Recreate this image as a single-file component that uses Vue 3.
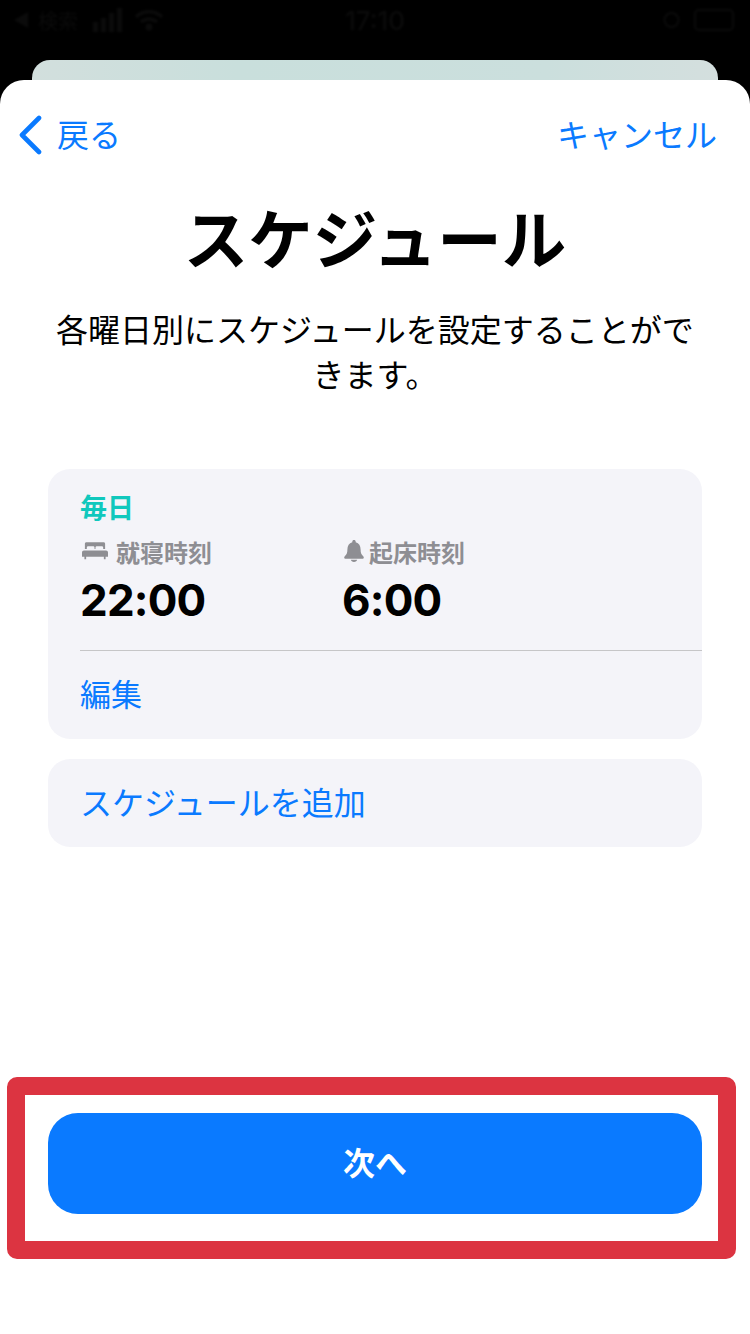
<script setup>
const schedule = { label: '毎日', bedtime: '22:00', wake: '6:00' }
</script>

<template>
  <div class="screen">
    <div class="status">
      <div class="status-left">
        <span class="back-tri"></span>
        <span class="search">検索</span>
        <svg class="signal" width="30" height="24" viewBox="0 0 30 24">
          <rect x="0" y="14" width="5" height="10" />
          <rect x="8" y="10" width="5" height="14" />
          <rect x="16" y="5" width="5" height="19" />
          <rect x="24" y="0" width="5" height="24" />
        </svg>
        <svg class="wifi" width="28" height="22" viewBox="0 0 28 22">
          <path d="M1 8a19 19 0 0 1 26 0M6 13a12 12 0 0 1 16 0" fill="none" stroke="#0b0b0b" stroke-width="3.500" />
          <circle cx="14" cy="18" r="3.500" fill="#0b0b0b" />
        </svg>
      </div>
      <span class="status-time">17:10</span>
      <div class="status-right">
        <svg width="17" height="22" viewBox="0 0 17 22">
          <circle cx="8.500" cy="11" r="7" fill="none" stroke="#0b0b0b" stroke-width="2" />
        </svg>
        <span class="battery"></span>
      </div>
    </div>

    <div class="behind"></div>

    <div class="sheet">
      <div class="nav">
        <a class="back">
          <svg width="24" height="40" viewBox="0 0 24 40">
            <path d="M21 3 L4 20 L21 37" fill="none" stroke="#0a7aff" stroke-width="4.600" stroke-linecap="round" stroke-linejoin="round" />
          </svg>
          <span class="nav-text">戻る</span>
        </a>
        <a class="nav-text">キャンセル</a>
      </div>

      <h1>スケジュール</h1>
      <p class="desc">各曜日別にスケジュールを設定することができます。</p>

      <div class="card">
        <div class="card-main">
          <div class="days">{{ schedule.label }}</div>
          <div class="times">
            <div class="time-col bed">
              <div class="time-label">
                <svg width="26" height="18" viewBox="0 0 27 18">
                  <path fill="#8e8e93" d="M3 1.500C3 .7 3.700 0 4.500 0h18c.8 0 1.500.7 1.500 1.500V7h-2V5.500c0-1-.8-1.500-1.700-1.500h-4.600c-.9 0-1.700.5-1.700 1.500V7h-1V5.500c0-1-.8-1.500-1.700-1.500H6.700C5.800 4 5 4.500 5 5.500V7H3zM2 8.500h23c1.100 0 2 .9 2 2V15h-2.500v2.500h-1.800V15H4.300v2.500H2.500V15H0v-4.500c0-1.100.9-2 2-2z" />
                </svg>
                <span>就寝時刻</span>
              </div>
              <div class="time-value">{{ schedule.bedtime }}</div>
            </div>
            <div class="time-col wake">
              <div class="time-label">
                <svg width="20" height="22" viewBox="0 0 20 22">
                  <path fill="#8e8e93" d="M10 0c1 0 1.700.7 1.700 1.700v.6C15 3.100 16.600 6 16.600 9.500c0 3.300.8 5 2.400 6.500.5.500.8 1 .8 1.500 0 .8-.6 1.300-1.500 1.300H1.700C.8 18.800.2 18.300.2 17.500c0-.5.3-1 .8-1.500 1.600-1.500 2.400-3.200 2.400-6.500C3.400 6 5 3.100 8.300 2.300v-.6C8.300.7 9 0 10 0zM6.800 19.800h6.400C13 21 11.700 22 10 22s-3-1-3.200-2.200z" />
                </svg>
                <span>起床時刻</span>
              </div>
              <div class="time-value">{{ schedule.wake }}</div>
            </div>
          </div>
        </div>
        <div class="edit-row">編集</div>
      </div>

      <div class="card add">スケジュールを追加</div>

      <button class="next">次へ</button>
    </div>

    <div class="highlight"></div>
  </div>
</template>

<style scoped>
.screen {
  position: relative;
  width: 750px;
  height: 1334px;
  overflow: hidden;
  background: #000;
  font-family: "Noto Sans CJK JP", "Liberation Sans", sans-serif;
}

.status {
  height: 40px;
  padding: 0 16px 0 14px;
  margin-bottom: 20px;
  position: relative;
  display: flex;
  justify-content: space-between;
  align-items: center;
  color: #0b0b0b;
  font-size: 26px;
  filter: blur(1px);
}

.status-left {
  display: flex;
  align-items: center;
  gap: 10px;
}

.search {
  font-size: 20px;
  margin-right: 5px;
}

.back-tri {
  width: 0;
  height: 0;
  border-top: 8px solid transparent;
  border-bottom: 8px solid transparent;
  border-right: 14px solid #0b0b0b;
}

.signal {
  margin-right: 2px;
}

.signal rect {
  fill: #0b0b0b;
}

.status-time {
  position: absolute;
  left: 240px;
  width: 270px;
  text-align: center;
  font-family: Inter, sans-serif;
  font-weight: 500;
}

.status-right {
  display: flex;
  align-items: center;
  gap: 14px;
}

.battery {
  width: 36px;
  height: 18px;
  border: 2px solid #0b0b0b;
  border-radius: 5px;
}

.behind {
  height: 20px;
  margin: 0 32px;
  border-radius: 18px 18px 0 0;
  background: linear-gradient(90deg, #d2dfdd, #c9dfdc 30%, #cbdfdd 75%, #d4dfde);
}

.sheet {
  height: 1254px;
  box-sizing: border-box;
  padding: 32px 48px 0;
  border-radius: 24px 24px 0 0;
  background: #fff;
  display: flex;
  flex-direction: column;
}

.nav {
  margin: 0 -15px 0 -30px;
  height: 46px;
  display: flex;
  justify-content: space-between;
  align-items: center;
  font-size: 32px;
  color: #0a7aff;
}

.nav-text {
  padding-bottom: 4px;
}

.back {
  display: flex;
  align-items: center;
  gap: 15px;
}

h1 {
  margin: 39px -20px 0;
  font-size: 64.5px;
  line-height: 78px;
  font-weight: 700;
  text-align: center;
  color: #000;
}

.desc {
  margin: 31px 0 0;
  font-size: 32px;
  line-height: 45px;
  text-align: center;
  color: #000;
}

.card {
  background: #f4f4f9;
  border-radius: 22px;
  margin-top: 20px;
}

.desc + .card {
  margin-top: 73px;
}

.card-main {
  padding: 19px 0 0 0;
  margin-left: 32px;
  height: 182px;
  box-sizing: border-box;
  border-bottom: 1px solid #c6c6c8;
}

.days {
  font-size: 27px;
  line-height: 38px;
  font-weight: 700;
  color: #10c8bd;
}

.times {
  display: flex;
  margin-top: 7px;
}

.time-col.bed {
  width: 262px;
}

.time-label {
  display: flex;
  align-items: center;
  gap: 5px;
  height: 36px;
  font-size: 24px;
  font-weight: 700;
  color: #8e8e93;
}

.bed .time-label {
  margin-left: 2px;
  gap: 8px;
}

.wake .time-label {
  margin-left: 2px;
}

.time-value {
  margin-top: 3px;
  font-family: Inter, "Liberation Sans", sans-serif;
  font-size: 44px;
  line-height: 56px;
  font-weight: 700;
  letter-spacing: -0.8px;
  color: #000;
}

.edit-row {
  padding: 0 0 5px 32px;
  height: 88px;
  box-sizing: border-box;
  display: flex;
  align-items: center;
  font-size: 31px;
  color: #0a7aff;
}

.add {
  height: 88px;
  box-sizing: border-box;
  padding: 0 0 4px 32px;
  display: flex;
  align-items: center;
  font-size: 32px;
  color: #0a7aff;
}

.next {
  margin-top: auto;
  margin-bottom: 120px;
  height: 101px;
  padding-bottom: 6px;
  border: none;
  border-radius: 30px;
  background: #0a7aff;
  color: #fff;
  font-family: inherit;
  font-size: 32px;
  font-weight: 700;
}

.highlight {
  position: absolute;
  left: 7px;
  top: 1077px;
  width: 729px;
  height: 182px;
  box-sizing: border-box;
  border: 18px solid #dc3441;
  border-radius: 10px;
  pointer-events: none;
}
</style>
